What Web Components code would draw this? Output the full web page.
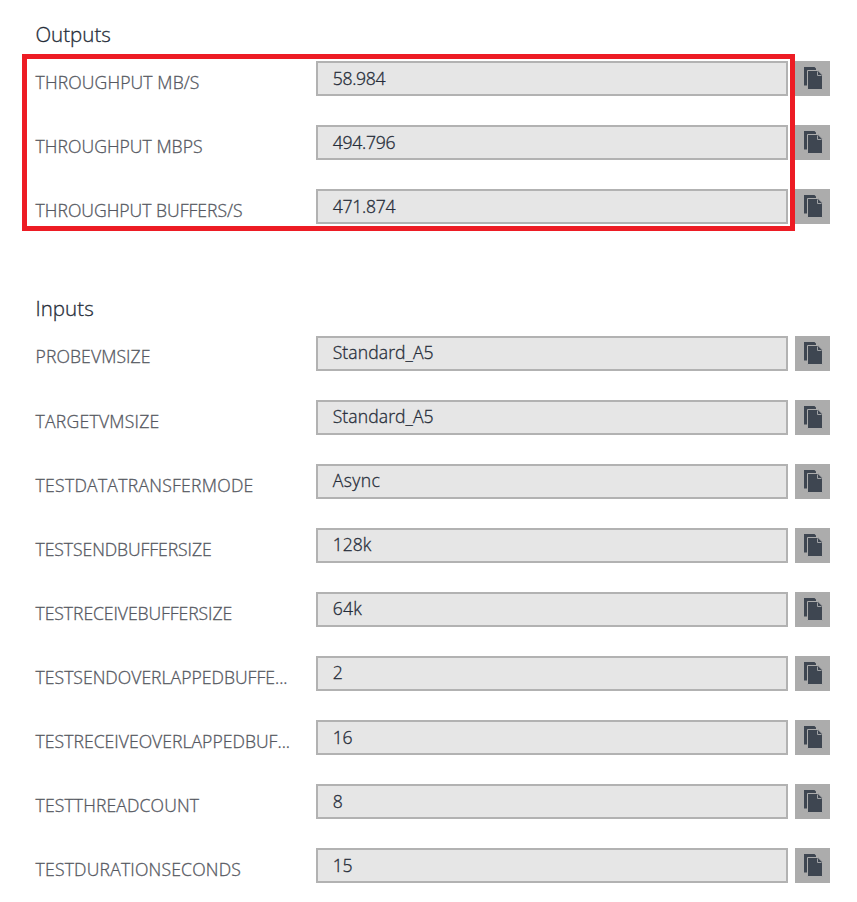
<!DOCTYPE html>
<html lang="en">
<head>
<meta charset="utf-8">
<title>Outputs and inputs</title>
<style>
body { margin: 0; background: #fff; font-family: "Open Sans", "Noto Sans", sans-serif; }
</style>
</head>
<body>
<deployment-panel></deployment-panel>
<script>
class FitText extends HTMLElement {
  connectedCallback() {
    const root = this.attachShadow({ mode: 'open' });
    root.innerHTML = `<style>:host{display:inline-block;white-space:nowrap;-webkit-text-stroke:.3px currentColor}span{display:inline-block}</style><span><slot></slot></span>`;
    const span = root.querySelector('span');
    const target = Number(this.getAttribute('width'));
    const n = this.textContent.length;
    const natural = span.getBoundingClientRect().width;
    if (target && n > 1) span.style.letterSpacing = ((target - natural) / n).toFixed(3) + 'px';
  }
}
class CopyButton extends HTMLElement {
  connectedCallback() {
    this.attachShadow({ mode: 'open' }).innerHTML = `
<style>
:host{display:block;width:35px;height:35px;background:#acacac}
svg{display:block}
</style>
<svg width="35" height="35" viewBox="0 0 35 35" role="img" aria-label="Copy">
<path fill="#3e4651" d="M9 6h10.500l1.500 1.500V9h-8v15.500H9z"/>
<path fill="#3e4651" stroke="#acacac" stroke-width="1" d="M12.500 9.500H23l4.500 4.500v14.500h-15z"/>
<path fill="none" stroke="#a0a2a5" stroke-width="1" d="M22.500 10.500v4h4"/>
</svg>`;
  }
}
class FieldRow extends HTMLElement {
  connectedCallback() {
    const a = n => this.getAttribute(n);
    this.attachShadow({ mode: 'open' }).innerHTML = `
<style>
:host{display:grid;grid-template-columns:281px 472px 35px;column-gap:0;height:35px;margin-bottom:29px}
.label{font-size:17.6px;font-weight:300;line-height:24px;color:#555861;padding:${9 + Number(a('label-shift') || 0)}px 0 0 .6px}
.value{box-sizing:border-box;height:35px;border:2px solid #b2b2b2;background:#e6e6e6;font-size:17.6px;font-weight:300;line-height:24px;color:#252c38;padding:${2 + Number(a('value-shift') || 0)}px 0 0 14.7px}
copy-button{margin-left:7px}
</style>
<div class="label"><fit-text width="${a('lw')}">${a('label')}</fit-text></div>
<div class="value"><fit-text width="${a('vw')}">${a('value')}</fit-text></div>
<copy-button></copy-button>`;
  }
}
class FieldGroup extends HTMLElement {
  connectedCallback() {
    this.attachShadow({ mode: 'open' }).innerHTML = `
<style>
:host{display:block;position:relative}
h2{margin:0;height:37px;font-size:20.500px;font-weight:300;line-height:20px;color:#252c38;padding-left:.4px;box-sizing:border-box}
:host(:not([framed])) h2{line-height:18px}
.frame{display:none;position:absolute;left:-13px;top:30px;width:773px;height:177px;box-sizing:border-box;border:5px solid #ed1c24}
:host([framed]) .frame{display:block}
</style>
<h2><fit-text width="${this.getAttribute('hw')}">${this.getAttribute('heading')}</fit-text></h2>
<slot></slot><div class="frame"></div>`;
  }
}
class DeploymentPanel extends HTMLElement {
  connectedCallback() {
    const outputs = [
      ['THROUGHPUT MB/S', 164, '58.984', 52.5, 0, 1],
      ['THROUGHPUT MBPS', 167, '494.796', 62.5, 0, 1],
      ['THROUGHPUT BUFFERS/S', 207, '471.874', 62.5, 0, 1]
    ];
    const inputs = [
      ['PROBEVMSIZE', 115, 'Standard_A5', 101, -1, 0],
      ['TARGETVMSIZE', 124, 'Standard_A5', 101, 0, 0],
      ['TESTDATATRANSFERMODE', 218, 'Async', 47.5, 0, 0],
      ['TESTSENDBUFFERSIZE', 176, '128k', 38.5, 0, 0],
      ['TESTRECEIVEBUFFERSIZE', 196.5, '64k', 29.5, 0, 0],
      ['TESTSENDOVERLAPPEDBUFFE...', 252, '2', 10, 0, 0],
      ['TESTRECEIVEOVERLAPPEDBUF...', 254.5, '16', 19.5, 0, 1],
      ['TESTTHREADCOUNT', 163.5, '8', 10, 0, 1],
      ['TESTDURATIONSECONDS', 205.5, '15', 19.5, 0, 1]
    ];
    const rows = list => list.map(([l, lw, v, vw, ls, vs]) =>
      `<field-row label="${l}" lw="${lw}" value="${v}" vw="${vw}" label-shift="${ls}" value-shift="${vs}"></field-row>`).join('');
    this.attachShadow({ mode: 'open' }).innerHTML = `
<style>
:host{display:flex;flex-direction:column;gap:46px;box-sizing:border-box;height:902px;overflow:hidden;padding:24px 0 0 35px}
</style>
<field-group heading="Outputs" hw="75.5" framed>${rows(outputs)}</field-group>
<field-group heading="Inputs" hw="58.5">${rows(inputs)}</field-group>`;
  }
}
customElements.define('fit-text', FitText);
customElements.define('copy-button', CopyButton);
customElements.define('field-row', FieldRow);
customElements.define('field-group', FieldGroup);
customElements.define('deployment-panel', DeploymentPanel);
</script>
</body>
</html>
